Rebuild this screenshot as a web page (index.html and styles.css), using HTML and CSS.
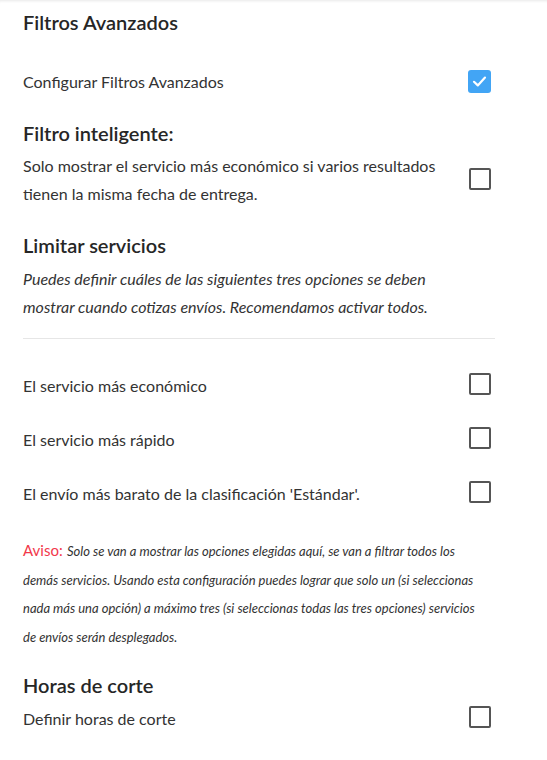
FILE: index.html
```html
<!DOCTYPE html>
<html lang="es">
<head>
    <meta charset="UTF-8"/>
    <title>Filtros Avanzados</title>
    <link rel="stylesheet" href="styles.css">
</head>
<body>
    <main class="panel">
        <h2 class="title">Filtros Avanzados</h2>
        <label class="row">
            <span>Configurar Filtros Avanzados</span>
            <span class="check is-checked">
                <svg viewBox="0 0 23 23" width="23" height="23"><path d="M6 11.8 L9.8 15.4 L17 7.6" fill="none" stroke="#fff" stroke-width="2.2" stroke-linecap="round" stroke-linejoin="round"/></svg>
            </span>
        </label>

        <h3 class="heading heading-smart">Filtro inteligente:</h3>
        <label class="row row-text">
            <span class="text">Solo mostrar el servicio más económico si varios resultados tienen la misma fecha de entrega.</span>
            <span class="check"></span>
        </label>

        <h3 class="heading heading-limit">Limitar servicios</h3>
        <p class="note">Puedes definir cuáles de las siguientes tres opciones se deben mostrar cuando cotizas envíos. Recomendamos activar todos.</p>
        <hr class="divider"/>

        <div class="options">
            <label class="row row-option">
                <span>El servicio más económico</span>
                <span class="check"></span>
            </label>
            <label class="row row-option">
                <span>El servicio más rápido</span>
                <span class="check"></span>
            </label>
            <label class="row row-option">
                <span>El envío más barato de la clasificación 'Estándar'.</span>
                <span class="check"></span>
            </label>
        </div>

        <p class="warning"><span class="warning-label">Aviso:</span> <em>Solo se van a mostrar las opciones elegidas aquí, se van a filtrar todos los demás servicios. Usando esta configuración puedes lograr que solo un (si seleccionas nada más una opción) a máximo tres (si seleccionas todas las tres opciones) servicios de envíos serán desplegados.</em></p>

        <h3 class="heading heading-cut">Horas de corte</h3>
        <label class="row row-cut">
            <span>Definir horas de corte</span>
            <span class="check"></span>
        </label>
    </main>
</body>
</html>
```

FILE: styles.css
```css
body {
    margin: 0;
    background: #fff;
    font-family: Lato, 'Noto Sans', sans-serif;
    color: #333;
    font-size: 16px;
    box-shadow: inset 0 3px 3px -2px #e8e8e8;
    min-height: 760px;
}

.panel {
    width: 472px;
    padding: 10px 0 0 23px;
}

.title,
.heading {
    margin: 0;
    font-size: 20px;
    line-height: 24px;
    font-weight: 600;
    color: #262626;
}

.row {
    display: flex;
    align-items: center;
    justify-content: space-between;
    height: 40px;
}

.title + .row {
    margin-top: 27px;
}

.heading-smart {
    margin-top: 20px;
}

.row-text {
    height: auto;
    margin-top: 7px;
    line-height: 28px;
}

.row-text .text {
    width: 425px;
}

.heading-limit {
    margin-top: 25px;
}

.note {
    width: 445px;
    margin: 8px 0 0;
    font-style: italic;
    line-height: 28px;
}

.divider {
    margin: 17px 0 0;
    border: 0;
    border-top: 1px solid #e6e6e6;
}

.options {
    margin-top: 19px;
}

.row-option {
    height: 54px;
}

.warning {
    width: 458px;
    margin: 16px 0 0;
    font-size: 13px;
    line-height: 28.6px;
    color: #333;
}

.warning em {
    font-style: italic;
}

.warning-label {
    margin-right: 1px;
    font-size: 15px;
    color: #f2384b;
}

.heading-cut {
    margin-top: 22px;
}

.row-cut {
    margin-top: 1px;
}

.check {
    flex: none;
    box-sizing: border-box;
    width: 22px;
    height: 22px;
    margin-right: 4px;
    border: 2px solid #555;
    border-radius: 2px;
    margin-top: -2px;
}

.check.is-checked {
    width: 23px;
    height: 23px;
    margin-right: 4px;
    margin-top: 0;
    border: 0;
    border-radius: 3px;
    background: #42a5f5;
}

.check svg {
    display: block;
}
```
